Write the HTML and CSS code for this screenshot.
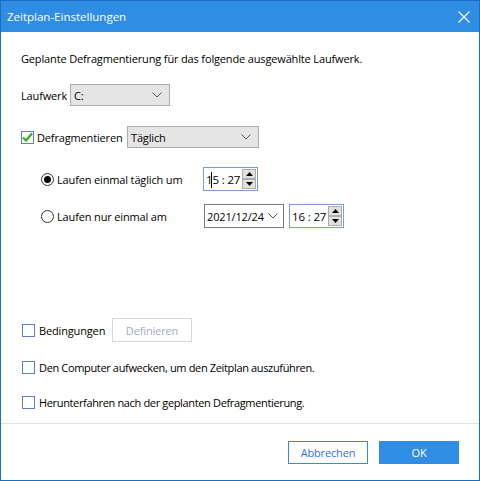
FILE: index.html
```html
<!DOCTYPE html>
<html lang="de">
<head>
<meta charset="utf-8">
<title>Zeitplan-Einstellungen</title>
<link rel="stylesheet" href="styles.css">
</head>
<body>
<div class="window">
  <div class="titlebar">
    <span class="title">Zeitplan-Einstellungen</span>
    <svg class="close" width="12" height="12" viewBox="0 0 12 12"><path d="M0.5 0.5 L11.5 11.5 M11.5 0.5 L0.5 11.5" stroke="#fff" stroke-width="1.1" fill="none"/></svg>
  </div>
  <div class="content">
    <div class="row desc">Geplante Defragmentierung für das folgende ausgewählte Laufwerk.</div>
    <div class="row drive">
      <span class="lbl">Laufwerk</span>
      <div class="select select-drive"><span>C:</span><svg class="chev" width="10" height="6" viewBox="0 0 10 6"><path d="M0.5 0.5 L5 5 L9.5 0.5" stroke="#555" fill="none"/></svg></div>
    </div>
    <div class="row defrag">
      <span class="check checked"><svg width="13" height="13" viewBox="0 0 13 13"><path d="M2 6.5 L5 9.5 L11 2.5" stroke="#3fae2a" stroke-width="2.4" fill="none"/></svg></span>
      <span class="lbl-defrag">Defragmentieren</span>
      <div class="select select-freq"><span>Täglich</span><svg class="chev" width="10" height="6" viewBox="0 0 10 6"><path d="M0.5 0.5 L5 5 L9.5 0.5" stroke="#555" fill="none"/></svg></div>
    </div>
    <div class="row radio-row r1">
      <span class="radio on"></span>
      <span class="radio-lbl">Laufen einmal täglich um</span>
      <div class="timebox"><span class="time"><span class="caret-wrap">1<span class="caret"></span>5</span> : 27</span><span class="spin"><span class="sbtn"><svg width="7" height="4" viewBox="0 0 7 4"><path d="M0 4 L3.5 0 L7 4 Z" fill="#000"/></svg></span><span class="sbtn"><svg width="7" height="4" viewBox="0 0 7 4"><path d="M0 0 L3.5 4 L7 0 Z" fill="#000"/></svg></span></span></div>
    </div>
    <div class="row radio-row r2">
      <span class="radio"></span>
      <span class="radio-lbl">Laufen nur einmal am</span>
      <div class="datebox"><span>2021/12/24</span><svg class="chev" width="10" height="6" viewBox="0 0 10 6"><path d="M0.5 0.5 L5 5 L9.5 0.5" stroke="#555" fill="none"/></svg></div>
      <div class="timebox tb2"><span class="time">16 : 27</span><span class="spin"><span class="sbtn"><svg width="7" height="4" viewBox="0 0 7 4"><path d="M0 4 L3.5 0 L7 4 Z" fill="#000"/></svg></span><span class="sbtn"><svg width="7" height="4" viewBox="0 0 7 4"><path d="M0 0 L3.5 4 L7 0 Z" fill="#000"/></svg></span></span></div>
    </div>
    <div class="row cond">
      <span class="check"></span>
      <span class="lbl-cond">Bedingungen</span>
      <button class="btn-def" disabled>Definieren</button>
    </div>
    <div class="row wake">
      <span class="check"></span>
      <span class="cb-lbl">Den Computer aufwecken, um den Zeitplan auszuführen.</span>
    </div>
    <div class="row shut">
      <span class="check"></span>
      <span class="cb-lbl">Herunterfahren nach der geplanten Defragmentierung.</span>
    </div>
  </div>
  <div class="footer">
    <button class="btn btn-cancel">Abbrechen</button>
    <button class="btn btn-ok">OK</button>
  </div>
</div>
</body>
</html>
```

FILE: styles.css
```css
* { box-sizing: border-box; }
html, body { margin: 0; padding: 0; }
body {
  font-family: "Open Sans", "Noto Sans", sans-serif;
  font-size: 11px;
  letter-spacing: -0.15px;
  color: #000;
  background: #fff;
}
.window {
  width: 480px;
  height: 481px;
  border: 1px solid #1c6cc2;
  border-top: none;
  display: flex;
  flex-direction: column;
  background: #fff;
}
.titlebar {
  height: 32px;
  background: #2f8de4;
  border-top: 1px solid #1c6cc2;
  display: flex;
  align-items: center;
  justify-content: space-between;
  padding: 0 9px 0 6px;
  color: #fff;
}
.title {
  font-size: 11.5px;
  letter-spacing: 0;
}
.close { display: block; margin-top: 1px; }
.content {
  flex: 1;
  display: flex;
  flex-direction: column;
  padding: 18px 0 0 20px;
}
.row {
  display: flex;
  align-items: center;
  white-space: nowrap;
}
.desc { height: 16px; }
.drive { height: 22px; margin-top: 18px; }
.lbl { width: 49px; }
.select {
  height: 22px;
  background: #e5e5e5;
  border: 1px solid #acacac;
  display: flex;
  align-items: center;
  justify-content: space-between;
  padding: 0 7px 0 3px;
}
.select-drive { width: 100px; }
.select-freq { width: 132px; }
.chev { display: block; }
.defrag { height: 22px; margin-top: 20px; }
.check {
  width: 13px;
  height: 13px;
  border: 1px solid #5b7fc9;
  background: #fff;
  display: inline-block;
  position: relative;
  flex: none;
}
.check svg { position: absolute; left: -1px; top: -1px; }
.lbl-defrag { margin-left: 3px; width: 90px; }
.radio-row { height: 24px; padding-left: 20px; }
.r1 { margin-top: 19px; }
.r2 { margin-top: 13px; }
.radio {
  width: 13px;
  height: 13px;
  border: 1px solid #333;
  border-radius: 50%;
  background: #fff;
  flex: none;
  display: flex;
  align-items: center;
  justify-content: center;
}
.radio.on::after {
  content: "";
  width: 7px;
  height: 7px;
  border-radius: 50%;
  background: #000;
}
.radio-lbl { margin-left: 3px; width: 146px; }
.timebox {
  width: 55px;
  height: 24px;
  border: 1px solid #7a9cd8;
  display: flex;
  align-items: center;
  justify-content: space-between;
  padding: 0 1px 0 2px;
}
.r2 .timebox { margin-left: 5px; }
.time { font-size: 11.5px; }
.caret-wrap { position: relative; }
.caret {
  position: absolute;
  left: 5px;
  top: 0;
  width: 1px;
  height: 16px;
  background: #000;
}
.spin {
  display: flex;
  flex-direction: column;
}
.sbtn {
  width: 14px;
  height: 10px;
  background: #e1e1e1;
  border: 1px solid #adadad;
  display: flex;
  align-items: center;
  justify-content: center;
}
.datebox {
  width: 80px;
  height: 24px;
  border: 1px solid #7a7a7a;
  display: flex;
  align-items: center;
  justify-content: space-between;
  padding: 0 5px 0 2px;
  margin-left: 1px;
  font-size: 11px;
}
.cond { height: 24px; margin-top: 90px; padding-left: 1px; }
.lbl-cond { margin-left: 4px; width: 73px; }
.btn-def {
  width: 80px;
  height: 24px;
  border: 1px solid #d9d9d9;
  background: #fff;
  color: #a7a7c6;
  font-family: inherit;
  font-size: 11px;
  letter-spacing: -0.15px;
  padding: 0;
}
.wake { height: 16px; margin-top: 17px; padding-left: 1px; }
.shut { height: 16px; margin-top: 19px; padding-left: 1px; }
.cb-lbl { margin-left: 4px; letter-spacing: -0.35px; }
.footer {
  height: 57px;
  border-top: 1px solid #e3e3e3;
  display: flex;
  justify-content: flex-end;
  align-items: flex-start;
  padding: 17px 20px 0 0;
  gap: 11px;
}
.btn {
  width: 80px;
  height: 23px;
  font-family: inherit;
  font-size: 11px;
  letter-spacing: -0.15px;
  padding: 0;
}
.btn-cancel {
  background: #fff;
  border: 1px solid #2f8de4;
  color: #3a6fcf;
}
.btn-ok {
  background: #2f8de4;
  border: 1px solid #2f8de4;
  color: #fff;
}
```
